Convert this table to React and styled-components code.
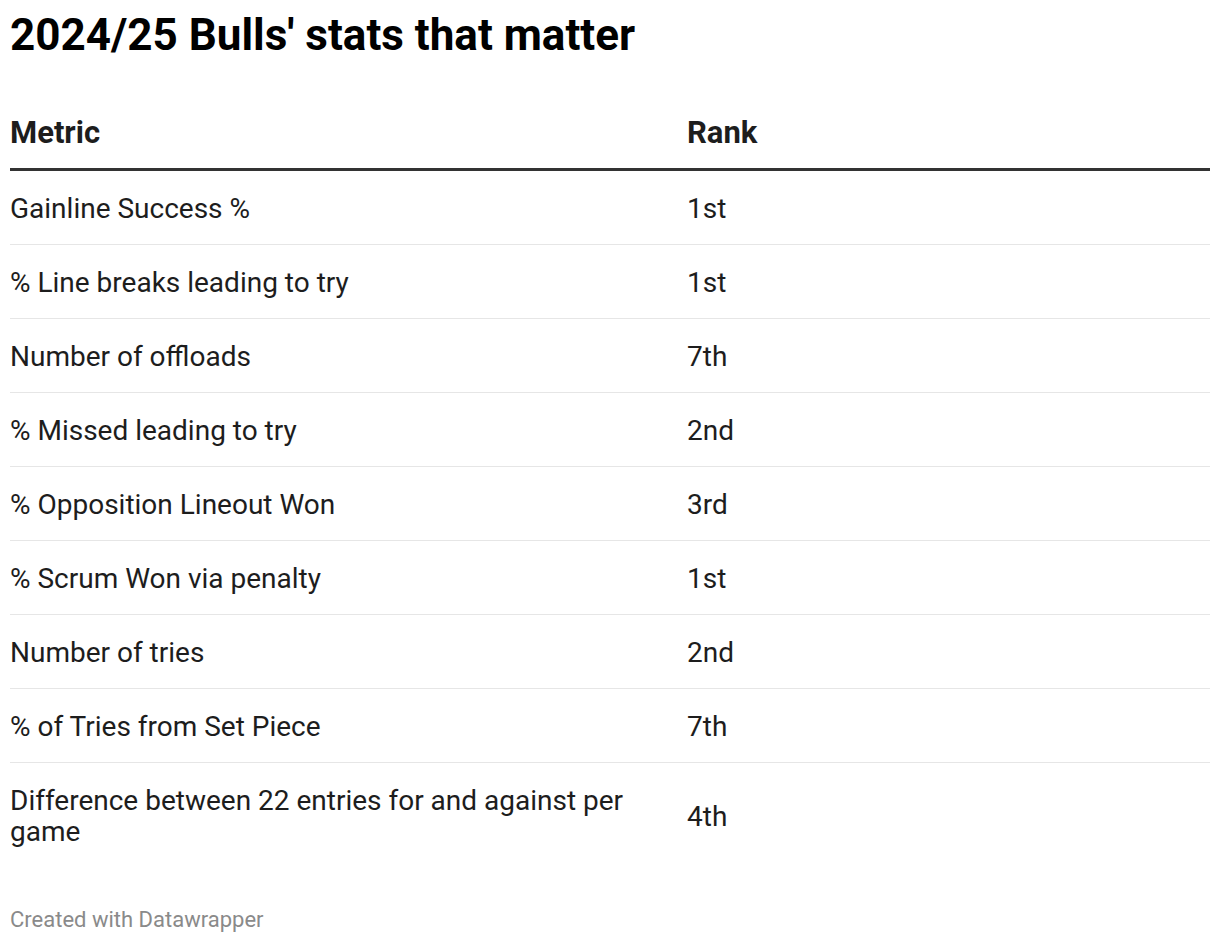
import React from "react";
import styled, { createGlobalStyle } from "styled-components";

const GlobalStyle = createGlobalStyle`
  html, body { margin: 0; padding: 0; background: #fff; }
  body { font-family: Roboto, "Liberation Sans", sans-serif; color: #1d1d1d; }
`;

const Page = styled.div`
  padding: 10px 10px 0 10px;
  display: flex;
  flex-direction: column;
`;

const Title = styled.h1`
  margin: 0;
  font-size: 44px;
  line-height: 50px;
  font-weight: 700;
  color: #000;
`;

const Table = styled.div`
  margin-top: 55px;
  display: grid;
  grid-template-columns: 677px 1fr;
`;

const HeadCell = styled.div`
  font-size: 31px;
  font-weight: 700;
  line-height: 36px;
  padding: 0 ${(p) => (p.$first ? "10px" : "0")} 17px 0;
  border-bottom: 3px solid #333;
  color: #1d1d1d;
`;

const Cell = styled.div`
  font-size: 28px;
  line-height: 31px;
  padding: 22px ${(p) => (p.$first ? "10px" : "0")} 20px 0;
  border-bottom: ${(p) => (p.$last ? "none" : "1px solid #e6e6e6")};
  display: flex;
  align-items: center;
  color: #1d1d1d;
`;

const Footer = styled.div`
  margin-top: 41px;
  font-size: 22px;
  line-height: 24px;
  color: #8a8a8a;
`;

const rows = [
  ["Gainline Success %", "1st"],
  ["% Line breaks leading to try", "1st"],
  ["Number of offloads", "7th"],
  ["% Missed leading to try", "2nd"],
  ["% Opposition Lineout Won", "3rd"],
  ["% Scrum Won via penalty", "1st"],
  ["Number of tries", "2nd"],
  ["% of Tries from Set Piece", "7th"],
  ["Difference between 22 entries for and against per game", "4th"],
];

export default function App() {
  return (
    <>
      <GlobalStyle />
      <Page>
        <Title>2024/25 Bulls' stats that matter</Title>
        <Table>
          <HeadCell $first>Metric</HeadCell>
          <HeadCell>Rank</HeadCell>
          {rows.map(([m, r], i) => {
            const last = i === rows.length - 1;
            return (
              <React.Fragment key={m}>
                <Cell $first $last={last}>{m}</Cell>
                <Cell $last={last}>{r}</Cell>
              </React.Fragment>
            );
          })}
        </Table>
        <Footer>Created with Datawrapper</Footer>
      </Page>
    </>
  );
}
